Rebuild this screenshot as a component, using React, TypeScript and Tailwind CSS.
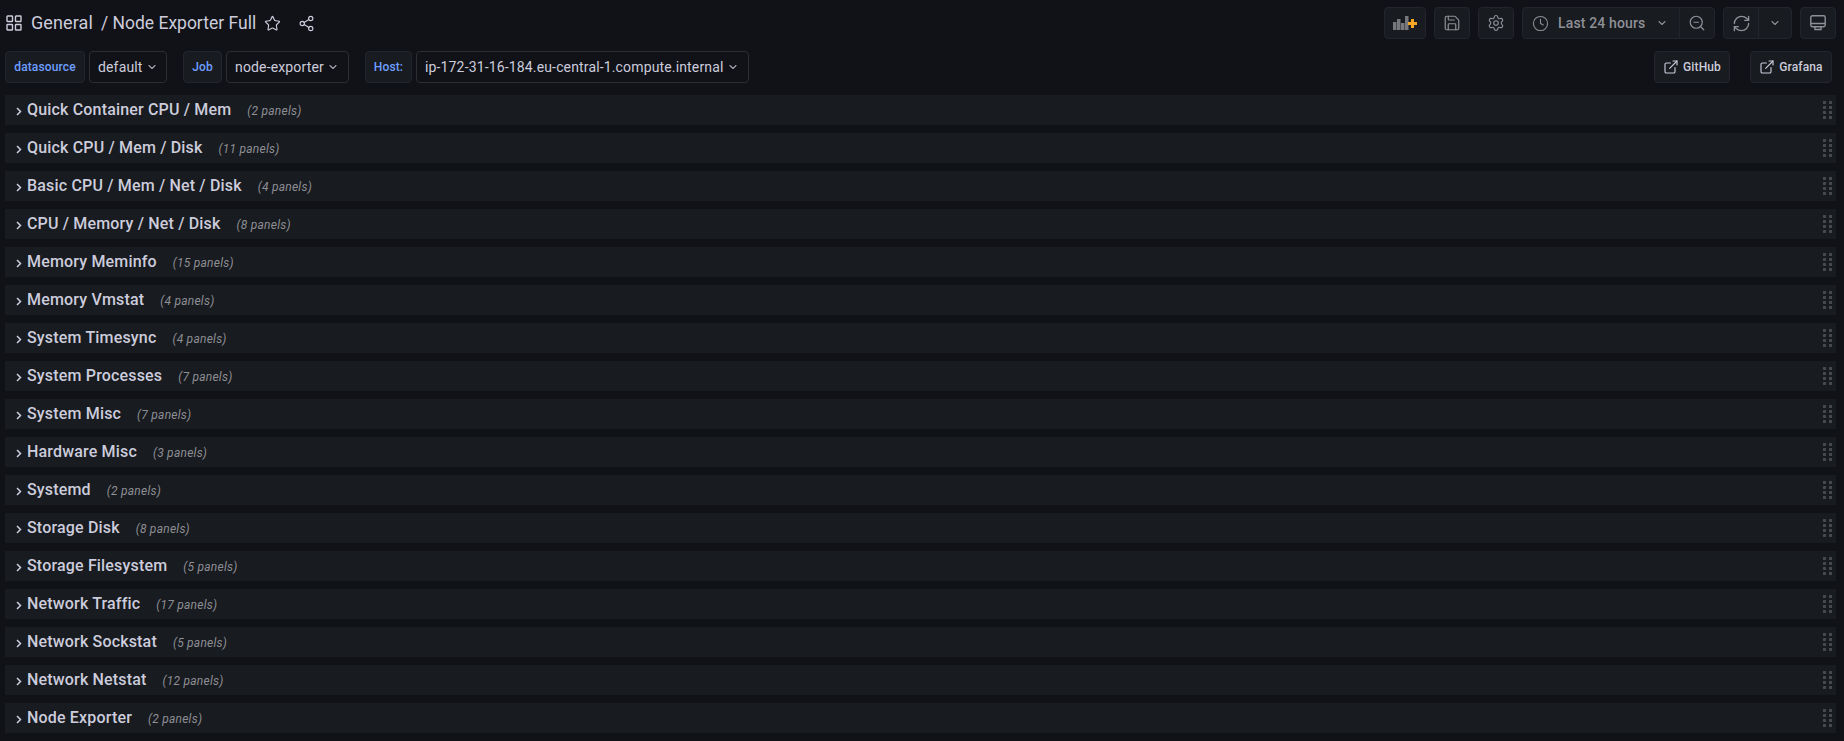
import { ChevronDown, Star, Share2, Save, Settings, Clock, ZoomOut, RefreshCw, ExternalLink } from "lucide-react";

const rows: [string, number][] = [
  ["Quick Container CPU / Mem", 2],
  ["Quick CPU / Mem / Disk", 11],
  ["Basic CPU / Mem / Net / Disk", 4],
  ["CPU / Memory / Net / Disk", 8],
  ["Memory Meminfo", 15],
  ["Memory Vmstat", 4],
  ["System Timesync", 4],
  ["System Processes", 7],
  ["System Misc", 7],
  ["Hardware Misc", 3],
  ["Systemd", 2],
  ["Storage Disk", 8],
  ["Storage Filesystem", 5],
  ["Network Traffic", 17],
  ["Network Sockstat", 5],
  ["Network Netstat", 12],
  ["Node Exporter", 2],
];

function VarLabel({ text, width }: { text: string; width: string }) {
  return (
    <div className={`${width} h-8 flex items-center justify-center rounded-sm border border-[#22252b] bg-[#181b1f] text-xs font-medium tracking-[0.13px] text-[#6e9fff]`}>
      {text}
    </div>
  );
}

function VarSelect({ text, width }: { text: string; width: string }) {
  return (
    <div className={`${width} h-8 flex items-center pl-[8px] rounded-sm border border-[#2c2e33] bg-[#111217] text-sm tracking-[0.15px] text-[#ccccdc]`}>
      <span>{text}</span>
      <ChevronDown className="w-3 h-3 ml-[3px] text-[#a5a6b0]" strokeWidth={2.2} />
    </div>
  );
}

function ToolButton({ width, children }: { width: string; children: React.ReactNode }) {
  return (
    <div className={`${width} h-8 flex items-center justify-center rounded-sm border border-[#22252b] bg-[#181b1f] text-[#8f9097]`}>
      {children}
    </div>
  );
}

function LinkButton({ text, width, className }: { text: string; width: string; className?: string }) {
  return (
    <div className={`${width} ${className ?? ""} h-8 flex items-center justify-center gap-[4px] rounded-sm border border-[#22252b] bg-[#181b1f] text-xs font-medium tracking-[0.13px] text-[#ccccdc]`}>
      <ExternalLink className="w-4 h-4" strokeWidth={1.7} />
      <span>{text}</span>
    </div>
  );
}

function AppsIcon() {
  return (
    <svg width="16" height="16" viewBox="0 0 16 16" fill="none" stroke="#ccccdc" strokeWidth="1.4">
      <rect x="1" y="1" width="5.5" height="5.5" rx="0.6" />
      <rect x="9.5" y="1" width="5.5" height="5.5" rx="0.6" />
      <rect x="1" y="9.5" width="5.5" height="5.5" rx="0.6" />
      <rect x="9.5" y="9.5" width="5.5" height="5.5" rx="0.6" />
    </svg>
  );
}

function AddPanelIcon() {
  return (
    <svg width="24" height="14" viewBox="0 0 24 14">
      <g fill="#77787e">
        <rect x="0" y="6" width="3.5" height="8" />
        <rect x="4" y="3" width="3.5" height="11" />
        <rect x="8" y="7" width="3.5" height="7" />
        <rect x="12" y="0" width="3.5" height="14" />
      </g>
      <path d="M15 6h3V3h3v3h3v3h-3v3h-3V9h-3z" fill="#f5a623" />
    </svg>
  );
}

function MonitorIcon() {
  return (
    <svg width="16" height="16" viewBox="0 0 16 16" fill="none" stroke="currentColor" strokeWidth="1.4">
      <rect x="0.8" y="0.8" width="14.4" height="10.9" rx="1.6" />
      <path d="M0.8 8.5h14.4M5 11.7v2.8h6v-2.800" />
    </svg>
  );
}

function RowChevron() {
  return (
    <svg width="6" height="9" viewBox="0 0 6 9" fill="none" stroke="#ccccdc" strokeWidth="1.5" className="mt-[2px]">
      <path d="M1 1L4.500 4.500L1 8" />
    </svg>
  );
}

function DragHandle() {
  return (
    <div className="grid grid-cols-[3px_3px] gap-x-[3px] gap-y-[2.300px]">
      {Array.from({ length: 8 }).map((_, i) => (
        <span key={i} className="w-[3px] h-[3px] bg-[#47484d]" />
      ))}
    </div>
  );
}

export default function App() {
  return (
    <div className="h-[741px] overflow-hidden bg-[#111217] font-['Roboto',sans-serif] text-[#ccccdc]">
      {/* top nav */}
      <div className="h-8 mt-[7px] flex items-center pl-[6px] pr-[8px]">
        <AppsIcon />
        <span className="ml-[9px] text-lg tracking-[0.1px] text-[#ccccdc]">General</span>
        <span className="ml-[8px] text-[17.5px] text-[#ccccdc]">/ Node Exporter Full</span>
        <Star className="w-[17px] h-[17px] ml-[8px]" strokeWidth={1.6} />
        <Share2 className="w-[17px] h-[17px] ml-[17px]" strokeWidth={1.6} />
        <div className="ml-auto flex items-center gap-2">
          <ToolButton width="w-[42px]"><AddPanelIcon /></ToolButton>
          <ToolButton width="w-[36px]"><Save className="w-[18px] h-[18px]" strokeWidth={1.6} /></ToolButton>
          <ToolButton width="w-[36px]"><Settings className="w-[18px] h-[18px]" strokeWidth={1.5} /></ToolButton>
          <div className="h-8 w-[193px] flex items-center rounded-sm border border-[#22252b] bg-[#181b1f] text-[#8f9097]">
            <div className="w-[157px] h-full flex items-center pl-[9px] border-r border-[#22252b]">
              <Clock className="w-[17px] h-[17px]" strokeWidth={1.5} />
              <span className="ml-[9px] text-sm font-medium tracking-[0.15px] whitespace-nowrap">Last 24 hours</span>
              <ChevronDown className="w-3 h-3 ml-[11px]" strokeWidth={2.2} />
            </div>
            <div className="flex-1 flex items-center justify-center"><ZoomOut className="w-[18px] h-[18px]" strokeWidth={1.6} /></div>
          </div>
          <div className="h-8 w-[69px] flex items-center rounded-sm border border-[#22252b] bg-[#181b1f] text-[#8f9097]">
            <div className="w-[35px] h-full flex items-center justify-center border-r border-[#22252b]"><RefreshCw className="w-[19px] h-[19px]" strokeWidth={1.7} /></div>
            <div className="flex-1 flex items-center justify-center"><ChevronDown className="w-3 h-3" strokeWidth={2.2} /></div>
          </div>
          <ToolButton width="w-[36px]"><MonitorIcon /></ToolButton>
        </div>
      </div>
      {/* variables */}
      <div className="mt-3 h-8 flex items-center pl-[5px] pr-[12px]">
        <VarLabel text="datasource" width="w-[80px]" />
        <div className="ml-[4px]"><VarSelect text="default" width="w-[78px]" /></div>
        <div className="ml-[16px]"><VarLabel text="Job" width="w-[39px]" /></div>
        <div className="ml-[4px]"><VarSelect text="node-exporter" width="w-[123px]" /></div>
        <div className="ml-[16px]"><VarLabel text="Host:" width="w-[47px]" /></div>
        <div className="ml-[4px]"><VarSelect text="ip-172-31-16-184.eu-central-1.compute.internal" width="w-[333px]" /></div>
        <LinkButton text="GitHub" width="w-[76px]" className="ml-auto" />
        <LinkButton text="Grafana" width="w-[82px]" className="ml-[20px]" />
      </div>
      {/* rows */}
      <div className="mt-[12px] ml-[5px] mr-[8px] flex flex-col gap-2">
        {rows.map(([title, count]) => (
          <div key={title} className="h-[30px] flex items-center bg-[#181b1f] pr-[4px]">
            <div className="ml-[11px] w-[11px]"><RowChevron /></div>
            <span className="text-base font-medium tracking-[0.17px] text-[#ccccdc]">{title}</span>
            <span className="ml-4 mt-[1px] text-xs italic tracking-[0.24px] text-[#8e8e95]">({count} panels)</span>
            <div className="ml-auto"><DragHandle /></div>
          </div>
        ))}
      </div>
    </div>
  );
}
